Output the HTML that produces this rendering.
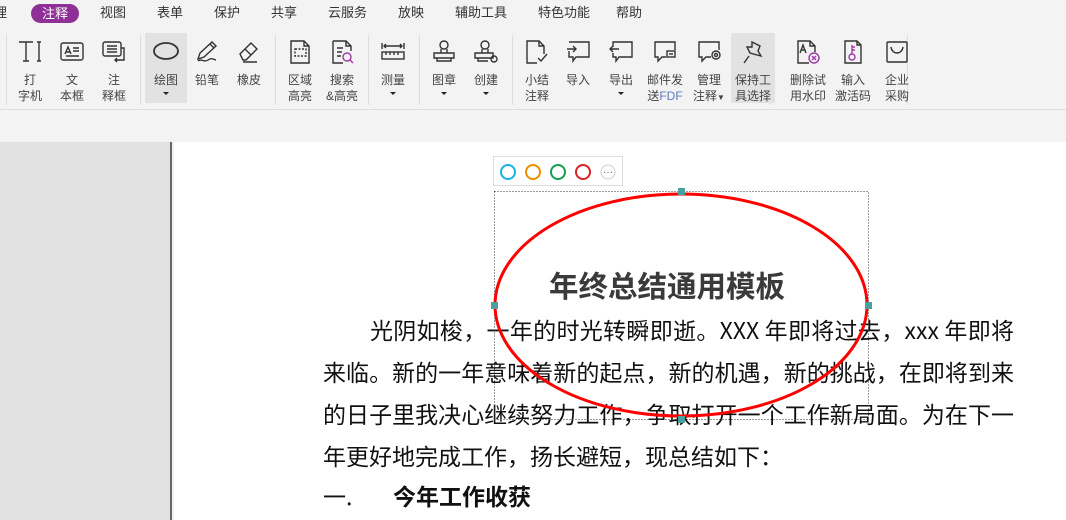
<!DOCTYPE html>
<html><head><meta charset="utf-8"><style>
*{margin:0;padding:0;box-sizing:border-box}
body{width:1066px;height:520px;overflow:hidden;background:#f3f3f3;font-family:"Liberation Sans","Noto Sans CJK SC",sans-serif;position:relative;color:#333}
.tab{position:absolute;top:5px;font-size:13px;color:#333;line-height:16px}
.pill{position:absolute;left:31px;top:4px;width:48px;height:19px;background:#8e3096;border-radius:10px;color:#fff;font-size:13px;text-align:center;line-height:19px}
.btn{position:absolute;top:33px;height:70px;width:44px;text-align:center;font-size:12px;line-height:16px;color:#444}
.btn svg{display:block;margin:6px auto 0;width:26px;height:26px}
.btn .l{margin-top:7px;white-space:nowrap}
.hl{background:#e2e2e2;border-radius:2px}
.sep{position:absolute;top:35px;width:1px;height:70px;background:#dcdcdc}
.arr{display:block;margin:0 auto;width:0;height:0;border-left:3px solid transparent;border-right:3px solid transparent;border-top:3px solid #222;margin-top:4px}
#line{position:absolute;left:0;top:109px;width:1066px;height:1px;background:#ddd}
#left{position:absolute;left:0;top:142px;width:172px;height:378px;background:#e1e1e1;border-right:2px solid #666}
#page{position:absolute;left:174px;top:142px;width:892px;height:378px;background:#fff}
.t{position:absolute;font-size:23px;line-height:30px;color:#111;white-space:nowrap;font-family:"WenQuanYi Zen Hei","Noto Sans CJK SC",sans-serif}
.j{white-space:normal;text-align:justify;text-align-last:justify;overflow:hidden;height:30px}
</style></head><body>
<div class="tab" style="left:-6px">理</div>
<div class="pill">注释</div>
<div class="tab" style="left:100px">视图</div>
<div class="tab" style="left:157px">表单</div>
<div class="tab" style="left:214px">保护</div>
<div class="tab" style="left:271px">共享</div>
<div class="tab" style="left:328px">云服务</div>
<div class="tab" style="left:398px">放映</div>
<div class="tab" style="left:455px">辅助工具</div>
<div class="tab" style="left:538px">特色功能</div>
<div class="tab" style="left:616px">帮助</div>

<div class="sep" style="left:6px"></div><div class="sep" style="left:140px"></div><div class="sep" style="left:275px"></div><div class="sep" style="left:368px"></div><div class="sep" style="left:419px"></div><div class="sep" style="left:512px"></div><div class="sep" style="left:770px"></div><div class="sep" style="left:907px"></div>

<div class="btn" style="left:8px"><svg viewBox="0 0 26 26" fill="none" stroke="#333" stroke-width="1.4"><path d="M2 3h14M9 3v19M6 22h6M20 3h4M22 3v19M20 22h4"/></svg><div class="l">打<br>字机</div></div>
<div class="btn" style="left:50px"><svg viewBox="0 0 26 26" fill="none" stroke="#333" stroke-width="1.4"><rect x="2" y="4" width="22" height="17" rx="2"/><path d="M6 15l3-7 3 7M7 13h4M14 9h6M14 12h6M7 17h13"/></svg><div class="l">文<br>本框</div></div>
<div class="btn" style="left:92px"><svg viewBox="0 0 26 26" fill="none" stroke="#333" stroke-width="1.4"><rect x="2" y="3" width="18" height="14" rx="2"/><path d="M6 7h10M6 10h10M6 13h10M20 9h3v12h-9M16 19l-2 2 2 2"/></svg><div class="l">注<br>释框</div></div>
<div class="btn hl" style="left:145px;width:42px"><svg viewBox="0 0 26 26" fill="none" stroke="#333" stroke-width="1.8" style="width:34px"><ellipse cx="13" cy="12" rx="12" ry="8"/></svg><div class="l">绘图</div><i class="arr"></i></div>
<div class="btn" style="left:185px"><svg viewBox="0 0 26 26" fill="none" stroke="#333" stroke-width="1.4"><path d="M4 20l2-6 12-11 4 4-12 11zM16 5l4 4M4 22c4-3 6 2 10-1s6 0 8 0"/></svg><div class="l">铅笔</div></div>
<div class="btn" style="left:227px"><svg viewBox="0 0 26 26" fill="none" stroke="#333" stroke-width="1.4"><path d="M4 15l11-11 6 6-11 11h-3zM9 10l6 6M7 23h14"/></svg><div class="l">橡皮</div></div>
<div class="btn" style="left:278px"><svg viewBox="0 0 26 26" fill="none" stroke="#333" stroke-width="1.4"><path d="M4 2h13l5 5v17H4zM17 2v5h5"/><rect x="8" y="10" width="11" height="7" stroke-dasharray="2 1.5"/></svg><div class="l">区域<br>高亮</div></div>
<div class="btn" style="left:320px"><svg viewBox="0 0 26 26" fill="none" stroke="#333" stroke-width="1.4"><path d="M4 2h13l5 5v5M17 2v5h5M4 2v22h10M8 9h6M8 13h5M8 17h4"/><circle cx="18" cy="18" r="4" stroke="#a03aa8"/><path d="M21 21l3 3" stroke="#a03aa8"/></svg><div class="l">搜索<br>&amp;高亮</div></div>
<div class="btn" style="left:371px"><svg viewBox="0 0 26 26" fill="none" stroke="#333" stroke-width="1.4"><path d="M2 4v6M24 4v6M4 7h18M6 5l-2 2 2 2M20 5l2 2-2 2"/><rect x="2" y="13" width="22" height="7"/><path d="M6 13v3M10 13v3M14 13v3M18 13v3"/></svg><div class="l">测量</div><i class="arr"></i></div>
<div class="btn" style="left:422px"><svg viewBox="0 0 26 26" fill="none" stroke="#333" stroke-width="1.4"><circle cx="13" cy="6" r="4"/><path d="M10 10v4M16 10v4M3 14h20v5H3zM6 19v3h14v-3"/></svg><div class="l">图章</div><i class="arr"></i></div>
<div class="btn" style="left:464px"><svg viewBox="0 0 26 26" fill="none" stroke="#333" stroke-width="1.4"><circle cx="12" cy="6" r="4"/><path d="M9 10v4M15 10v4M2 14h18v5H2zM5 19v3h10"/><circle cx="21" cy="20" r="3"/></svg><div class="l">创建</div><i class="arr"></i></div>
<div class="btn" style="left:515px"><svg viewBox="0 0 26 26" fill="none" stroke="#333" stroke-width="1.4"><path d="M13 24H3V2h12l5 5v8M15 2v5h5M14 19l3 3 6-7"/></svg><div class="l">小结<br>注释</div></div>
<div class="btn" style="left:556px"><svg viewBox="0 0 26 26" fill="none" stroke="#333" stroke-width="1.4"><path d="M4 3h20v15H11l-3 4v-4H4v-6M2 10h9M8 7l3 3-3 3"/></svg><div class="l">导入</div></div>
<div class="btn" style="left:599px"><svg viewBox="0 0 26 26" fill="none" stroke="#333" stroke-width="1.4"><path d="M5 8V3h19v15H11l-3 4v-4H5v-4M2 10h9M5 7l-3 3 3 3"/></svg><div class="l">导出</div><i class="arr"></i></div>
<div class="btn" style="left:643px"><svg viewBox="0 0 26 26" fill="none" stroke="#333" stroke-width="1.4"><path d="M14 18H10l-4 4v-4H3V3h20v8"/><rect x="15" y="12" width="8" height="6"/><path d="M17 15h4"/></svg><div class="l">邮件发<br>送<span style="color:#5a7ec0">FDF</span></div></div>
<div class="btn" style="left:687px"><svg viewBox="0 0 26 26" fill="none" stroke="#333" stroke-width="1.4"><path d="M15 18H10l-4 4v-4H3V3h20v8"/><circle cx="20" cy="16" r="4"/><circle cx="20" cy="16" r="1.5"/></svg><div class="l">管理<br>注释<span style="font-size:8px">▼</span></div></div>
<div class="btn hl" style="left:731px"><svg viewBox="0 0 26 26" fill="none" stroke="#333" stroke-width="1.4"><path d="M12 3l8 4-2 5 3 5-11-3-3-6 5 0zM9 17l-5 7"/></svg><div class="l">保持工<br>具选择</div></div>
<div class="btn" style="left:786px"><svg viewBox="0 0 26 26" fill="none" stroke="#333" stroke-width="1.4"><path d="M14 24H3V2h12l5 5v6M15 2v5h5M5 14l3-8 3 8M6 11h4"/><circle cx="19" cy="19" r="5" stroke="#a03aa8"/><path d="M17 17l4 4M21 17l-4 4" stroke="#a03aa8"/></svg><div class="l">删除试<br>用水印</div></div>
<div class="btn" style="left:831px"><svg viewBox="0 0 26 26" fill="none" stroke="#333" stroke-width="1.4"><path d="M5 2h12l4 4v18H5zM17 2v4h4"/><circle cx="12" cy="18" r="3" stroke="#a03aa8"/><path d="M12 15V6M12 8h3M12 11h3" stroke="#a03aa8"/></svg><div class="l">输入<br>激活码</div></div>
<div class="btn" style="left:875px"><svg viewBox="0 0 26 26" fill="none" stroke="#333" stroke-width="1.4"><rect x="3" y="3" width="20" height="20" rx="1"/><path d="M7 8c1 8 11 8 12 0"/></svg><div class="l">企业<br>采购</div></div>

<div id="line"></div>
<div id="left"></div>
<div id="page"></div>

<div class="t" style="left:549px;top:268px;font-size:29.5px;line-height:34px;font-weight:bold;color:#3a3a3a">年终总结通用模板</div>
<div class="t j" style="left:370px;top:314px;width:644px">光阴如梭，一年的时光转瞬即逝。XXX 年即将过去，xxx 年即将</div>
<div class="t j" style="left:323px;top:356px;width:691px">来临。新的一年意味着新的起点，新的机遇，新的挑战，在即将到来</div>
<div class="t j" style="left:323px;top:398px;width:691px">的日子里我决心继续努力工作，争取打开一个工作新局面。为在下一</div>
<div class="t" style="left:323px;top:440px">年更好地完成工作，扬长避短，现总结如下：</div>
<div class="t" style="left:323px;top:480px">一.</div>
<div class="t" style="left:393px;top:480px;font-weight:bold">今年工作收获</div>

<div style="position:absolute;left:493px;top:156px;width:130px;height:30px;background:#fff;border:1px solid #ddd"></div>
<svg style="position:absolute;left:0;top:0" width="1066" height="520">
<circle cx="508" cy="172" r="7" fill="none" stroke="#1ab3e0" stroke-width="2"/>
<circle cx="533" cy="172" r="7" fill="none" stroke="#f08c00" stroke-width="2"/>
<circle cx="558" cy="172" r="7" fill="none" stroke="#12a050" stroke-width="2"/>
<circle cx="583" cy="172" r="7" fill="none" stroke="#e02020" stroke-width="2"/>
<circle cx="608" cy="172" r="7" fill="none" stroke="#ccc" stroke-width="1"/>
<text x="608" y="175" font-size="10" text-anchor="middle" fill="#555" font-family="Liberation Sans">···</text>
<rect x="494.5" y="191.5" width="374" height="228" fill="none" stroke="#333" stroke-width="1" stroke-dasharray="1 2"/>
<ellipse cx="681" cy="305" rx="186" ry="111" fill="none" stroke="#f00" stroke-width="3"/>
<g fill="#4aa0a0"><rect x="678" y="188" width="7" height="7"/><rect x="678" y="416" width="7" height="7"/><rect x="491" y="302" width="7" height="7"/><rect x="865" y="302" width="7" height="7"/></g>
</svg>
</body></html>
